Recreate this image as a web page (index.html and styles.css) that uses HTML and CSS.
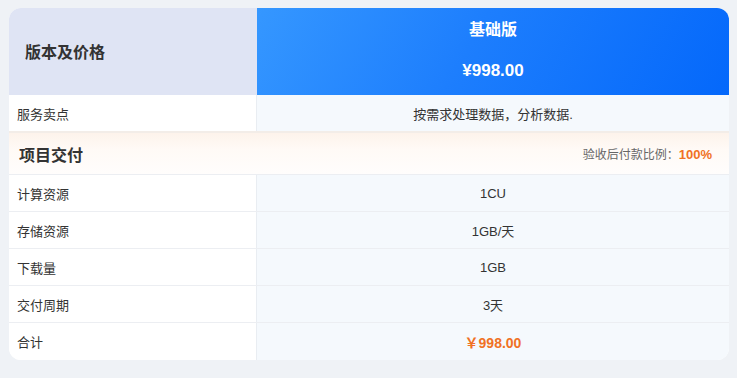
FILE: index.html
```html
<!DOCTYPE html>
<html lang="zh">
<head>
<meta charset="utf-8">
<link rel="stylesheet" href="styles.css">
</head>
<body>
<div class="card">
  <div class="row head">
    <div class="cell label-head">版本及价格</div>
    <div class="cell plan">
      <div class="plan-name">基础版</div>
      <div class="plan-price">¥998.00</div>
    </div>
  </div>
  <div class="row serv">
    <div class="cell key">服务卖点</div>
    <div class="cell val">按需求处理数据，分析数据.</div>
  </div>
  <div class="section">
    <div class="section-title">项目交付</div>
    <div class="section-note">验收后付款比例：<b>100%</b></div>
  </div>
  <div class="row">
    <div class="cell key">计算资源</div>
    <div class="cell val">1CU</div>
  </div>
  <div class="row">
    <div class="cell key">存储资源</div>
    <div class="cell val">1GB/天</div>
  </div>
  <div class="row">
    <div class="cell key">下载量</div>
    <div class="cell val">1GB</div>
  </div>
  <div class="row">
    <div class="cell key">交付周期</div>
    <div class="cell val">3天</div>
  </div>
  <div class="row last">
    <div class="cell key">合计</div>
    <div class="cell val total">￥998.00</div>
  </div>
</div>
</body>
</html>
```

FILE: styles.css
```css
* { box-sizing: border-box; }
html, body { margin: 0; }
body {
  background: #eff2f6;
  font-family: "Liberation Sans", "Noto Sans CJK SC", sans-serif;
  color: #333;
  padding: 8px 8px 0 9px;
}
.card {
  width: 720px;
  border-radius: 12px;
  overflow: hidden;
  background: #fff;
}
.row {
  display: grid;
  grid-template-columns: 248px 1fr;
  height: 37px;
  border-bottom: 1px solid #eceef2;
}
.row.serv { height: 36px; border-bottom: none; }
.row.last { border-bottom: none; height: 37px; }
.cell {
  display: flex;
  align-items: center;
  font-size: 13px;
}
.key {
  padding-left: 8px;
  background: #fff;
  border-right: 1px solid #e9edf2;
}
.val {
  justify-content: center;
  background: #f5f9fd;
}
.row.head { height: 87px; border-bottom: none; }
.label-head {
  background: #dfe4f4;
  font-size: 16px;
  font-weight: bold;
  padding-left: 16px;
  padding-bottom: 2px;
  color: #333;
  border-right: none;
}
.plan {
  flex-direction: column;
  justify-content: center;
  background: linear-gradient(120deg, #3597ff 0%, #1d7efd 45%, #0468fb 100%);
  color: #fff;
  font-weight: bold;
}
.plan-name { font-size: 16px; line-height: 20px; margin-top: -2px; }
.plan-price { font-size: 17px; line-height: 20px; margin-top: 21px; }
.section {
  display: flex;
  align-items: center;
  justify-content: space-between;
  height: 44px;
  padding: 0 17px 0 10px;
  background: linear-gradient(to bottom, #fdf3eb 0%, #fffaf6 40%, #fffdfc 100%);
  border-top: 2px solid #f3ede8;
  border-bottom: 1px solid #eceef2;
}
.section-title { font-size: 16px; font-weight: bold; color: #333; }
.section-note { font-size: 12px; color: #666; }
.section-note b { color: #f07124; font-size: 13px; }
.total { color: #f07124; font-weight: bold; font-size: 14px; }
```
